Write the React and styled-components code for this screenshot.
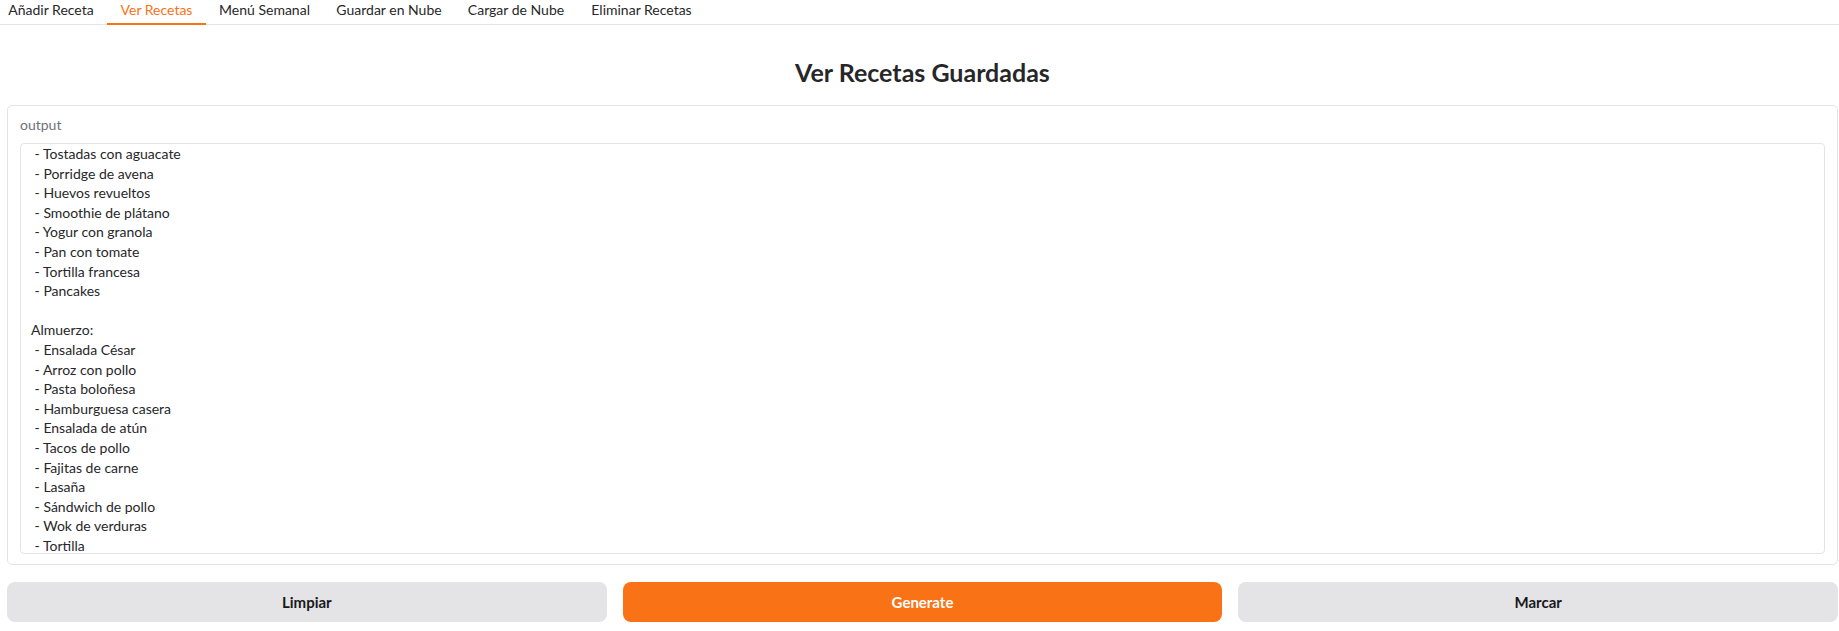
import React from "react";
import styled, { createGlobalStyle } from "styled-components";

const Global = createGlobalStyle`
  html, body { margin: 0; padding: 0; background: #ffffff; }
  body { font-family: Lato, "Liberation Sans", sans-serif; color: #27272a; }
  * { box-sizing: border-box; }
`;

const Page = styled.div`
  width: 100%;
  min-height: 631px;
  background: #ffffff;
`;

const TabBar = styled.nav`
  height: 25px;
  border-bottom: 1px solid #e4e4e7;
`;

const TabList = styled.div`
  display: flex;
  margin-left: -5px;
  height: 25px;
`;

const Tab = styled.button`
  flex: 0 0 ${(p) => p.$w}px;
  height: 25px;
  margin: 0;
  padding: 0;
  border: none;
  border-bottom: 2px solid ${(p) => (p.$active ? "#f97316" : "transparent")};
  background: transparent;
  font-family: Lato, "Liberation Sans", sans-serif;
  font-size: 14px;
  line-height: 19px;
  color: ${(p) => (p.$active ? "#f97316" : "#27272a")};
  text-align: center;
  align-self: flex-start;
  display: flex;
  justify-content: center;
  align-items: flex-start;
  white-space: nowrap;
  cursor: pointer;
`;

const Main = styled.main`
  padding: 0 1px 0 7px;
  display: flex;
  flex-direction: column;
`;

const Title = styled.h2`
  margin: 33px 0 0;
  font-size: 25px;
  line-height: 29px;
  font-weight: 700;
  text-align: center;
  color: #27272a;
`;

const Block = styled.section`
  margin-top: 18px;
  border: 1px solid #e4e4e7;
  border-radius: 5px;
  padding: 9px 12px 10px;
  display: flex;
  flex-direction: column;
`;

const Label = styled.span`
  font-size: 14px;
  line-height: 19px;
  color: #71717a;
  margin-bottom: 9px;
`;

const Output = styled.div`
  height: 411px;
  border: 1px solid #e4e4e7;
  border-radius: 4px;
  padding: 0 10px;
  font-size: 14px;
  line-height: 19.6px;
  color: #27272a;
  white-space: pre-wrap;
  overflow: hidden;
`;

const ButtonRow = styled.div`
  margin-top: 17px;
  display: grid;
  grid-template-columns: repeat(3, 1fr);
  gap: 16px;
`;

const Button = styled.button`
  height: 40px;
  border: none;
  border-radius: 8px;
  font-family: Lato, "Liberation Sans", sans-serif;
  font-size: 15px;
  font-weight: 700;
  background: ${(p) => (p.$primary ? "#f97316" : "#e4e4e7")};
  color: ${(p) => (p.$primary ? "#ffffff" : "#18181b")};
  cursor: pointer;
`;

const tabs = [
  { label: "Añadir Receta", w: 112 },
  { label: "Ver Recetas", w: 99, active: true },
  { label: "Menú Semanal", w: 117 },
  { label: "Guardar en Nube", w: 132 },
  { label: "Cargar de Nube", w: 122 },
  { label: "Eliminar Recetas", w: 129 },
];

const recipes = ` - Tostadas con aguacate
 - Porridge de avena
 - Huevos revueltos
 - Smoothie de plátano
 - Yogur con granola
 - Pan con tomate
 - Tortilla francesa
 - Pancakes

Almuerzo:
 - Ensalada César
 - Arroz con pollo
 - Pasta boloñesa
 - Hamburguesa casera
 - Ensalada de atún
 - Tacos de pollo
 - Fajitas de carne
 - Lasaña
 - Sándwich de pollo
 - Wok de verduras
 - Tortilla`;

export default function App() {
  return (
    <Page>
      <Global />
      <TabBar>
        <TabList>
          {tabs.map((t) => (
            <Tab key={t.label} $w={t.w} $active={t.active}>
              {t.label}
            </Tab>
          ))}
        </TabList>
      </TabBar>
      <Main>
        <Title>Ver Recetas Guardadas</Title>
        <Block>
          <Label>output</Label>
          <Output>{recipes}</Output>
        </Block>
        <ButtonRow>
          <Button>Limpiar</Button>
          <Button $primary>Generate</Button>
          <Button>Marcar</Button>
        </ButtonRow>
      </Main>
    </Page>
  );
}
